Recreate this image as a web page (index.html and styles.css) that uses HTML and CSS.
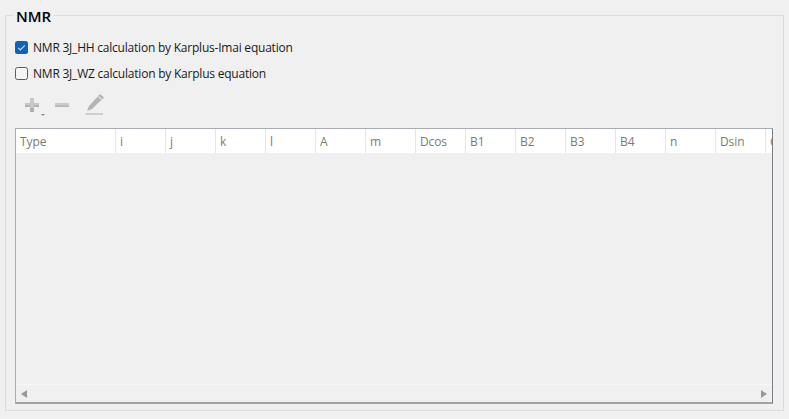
FILE: index.html
```html
<!DOCTYPE html>
<html lang="en">
<head>
<meta charset="utf-8">
<title>NMR</title>
<link rel="stylesheet" href="styles.css">
</head>
<body>
<fieldset class="group">
  <legend class="group-title">NMR</legend>
  <label class="check-row">
    <span class="box box-on"><svg width="13" height="13" viewBox="0 0 13 13"><path d="M3.2 6.8 5.4 9 9.8 4.4" fill="none" stroke="#cfe2f5" stroke-width="1.1"/></svg></span>
    <span>NMR 3J_HH calculation by Karplus-Imai equation</span>
  </label>
  <label class="check-row">
    <span class="box"></span>
    <span>NMR 3J_WZ calculation by Karplus equation</span>
  </label>
  <div class="toolbar">
    <svg class="tool tool-add" width="24" height="24" viewBox="0 0 24 24">
      <path d="M8 5h4v5h5v4h-5v5H8v-5H3v-4h5z" fill="#c6c6c6"/>
      <path d="M8 15h4v4H8zM3 12.500h5V14H3zM12 12.500h5V14h-5z" fill="#aeaeae"/>
      <path d="M19 21h4l-2 2z" fill="#8a8a8a"/>
    </svg>
    <svg class="tool tool-remove" width="16" height="24" viewBox="0 0 16 24">
      <rect x="1" y="10" width="14" height="4" fill="#cacaca"/>
      <rect x="1" y="12.500" width="14" height="1.500" fill="#b4b4b4"/>
    </svg>
    <svg class="tool tool-edit" width="22" height="24" viewBox="0 0 22 24">
      <path d="M16 1l4 3.500L8 16l-5 2 2-5z" fill="#b4b4b4"/>
      <path d="M14.500 2.500l4 3.500-1.200 1.200-4-3.500z" fill="#d4d4d4"/>
      <path d="M2 20h17v2H1z" fill="#cfcfcf"/>
    </svg>
  </div>
  <div class="table-frame">
    <div class="table-head">
      <div class="col col-wide">Type</div>
      <div class="col">i</div>
      <div class="col">j</div>
      <div class="col">k</div>
      <div class="col">l</div>
      <div class="col">A</div>
      <div class="col">m</div>
      <div class="col">Dcos</div>
      <div class="col">B1</div>
      <div class="col">B2</div>
      <div class="col">B3</div>
      <div class="col">B4</div>
      <div class="col">n</div>
      <div class="col">Dsin</div>
      <div class="col col-last">C</div>
    </div>
    <div class="table-body"></div>
    <div class="scrollbar">
      <span class="arrow arrow-left"></span>
      <span class="arrow arrow-right"></span>
    </div>
  </div>
</fieldset>
</body>
</html>
```
FILE: styles.css
```css
html, body {
  margin: 0;
  height: 100%;
  background: #f0f0f0;
}
body {
  padding: 5px 5px 0 5px;
  box-sizing: border-box;
  height: 419px;
  overflow: hidden;
  font-family: "Open Sans", "Noto Sans", sans-serif;
  font-size: 12px;
  color: #1a1a1a;
}
.group {
  box-sizing: border-box;
  margin: 0;
  width: 779px;
  min-width: 0;
  height: 406px;
  padding: 9px 10px 6px 9px;
  border: 1px solid #dcdcdc;
  display: flex;
  flex-direction: column;
}
.group-title {
  margin-left: -2px;
  padding: 3px 3px 0;
  font-size: 15px;
  font-weight: 600;
  line-height: 17px;
  color: #000;
}
.check-row {
  display: flex;
  align-items: center;
  gap: 5px;
  height: 26px;
  letter-spacing: -0.22px;
  flex: none;
}
.box {
  box-sizing: border-box;
  width: 13px;
  height: 13px;
  border: 1px solid #5c5c5c;
  border-radius: 2.500px;
  background: #f5f5f5;
  display: block;
}
.box-on {
  border: 0;
  background: #0f62b8;
}
.box-on svg {
  display: block;
}
.toolbar {
  display: flex;
  align-items: center;
  gap: 2px;
  height: 28px;
  margin-top: 5px;
  padding-left: 7px;
  flex: none;
}
.tool-remove {
  margin-left: 6px;
}
.tool-edit {
  margin-left: 12px;
}
.table-frame {
  flex: 1;
  min-height: 0;
  margin-top: 9px;
  border: 1px solid #a9adb3;
  border-right-color: #7a7f87;
  border-bottom: 2px solid #a0a4aa;
  display: flex;
  flex-direction: column;
  overflow: hidden;
}
.table-head {
  display: flex;
  height: 24px;
  background: #fff;
  flex: none;
}
.col {
  box-sizing: border-box;
  flex: none;
  width: 50px;
  padding-left: 4px;
  line-height: 26px;
  color: #7d7d6e;
  letter-spacing: -0.1px;
  border-right: 1px solid #e5e5e5;
  white-space: nowrap;
}
.col-wide {
  width: 100px;
}
.col-last {
  border-right: 0;
}
.table-body {
  flex: 1;
}
.scrollbar {
  height: 17px;
  flex: none;
  border-top: 1px solid #f7f7f7;
  display: flex;
  align-items: center;
  justify-content: space-between;
  padding: 0 5px;
}
.arrow {
  width: 0;
  height: 0;
  border-top: 4.500px solid transparent;
  border-bottom: 4.500px solid transparent;
}
.arrow-left {
  border-right: 6px solid #999;
}
.arrow-right {
  border-left: 6px solid #999;
}
```
